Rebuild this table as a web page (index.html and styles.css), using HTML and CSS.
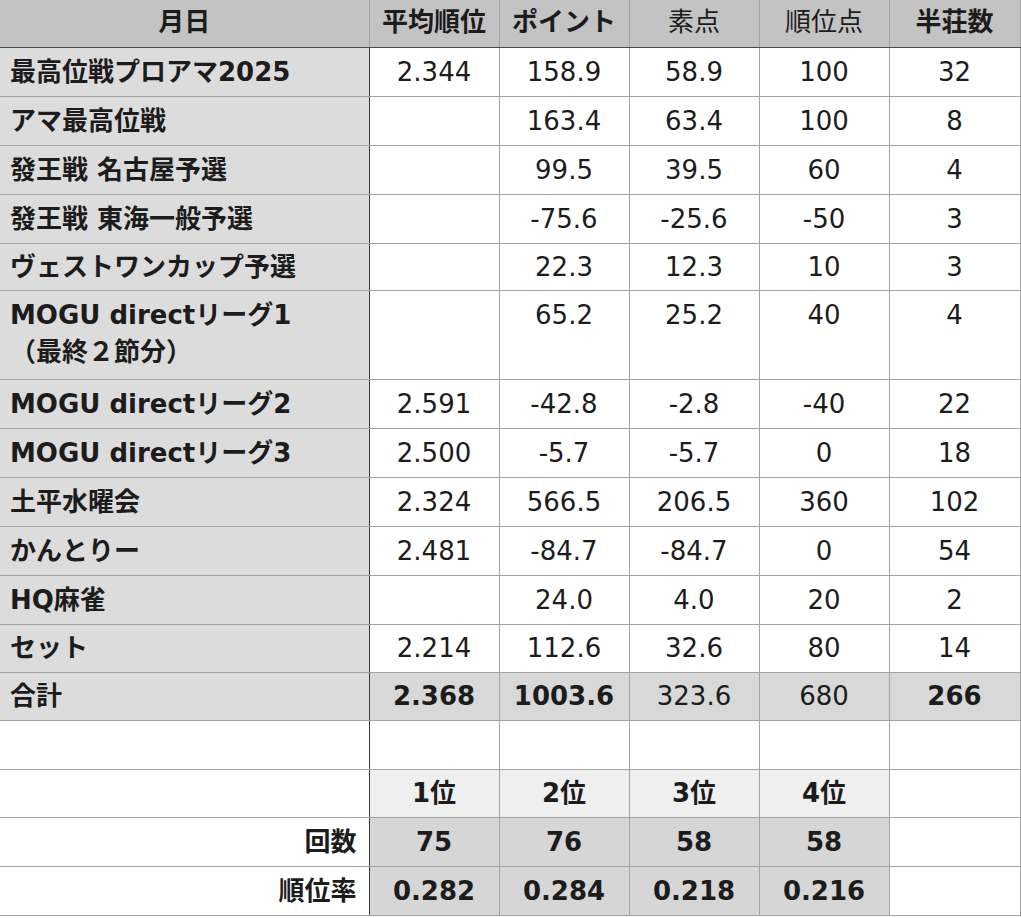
FILE: index.html
```html
<!DOCTYPE html>
<html lang="ja">
<head>
<meta charset="utf-8">
<link rel="stylesheet" href="styles.css">
</head>
<body>
<table class="sheet">
  <colgroup>
    <col class="c-name"><col class="c-num"><col class="c-num"><col class="c-num"><col class="c-num"><col class="c-last">
  </colgroup>
  <thead>
    <tr>
      <th class="b">月日</th>
      <th class="b">平均順位</th>
      <th class="b">ポイント</th>
      <th>素点</th>
      <th>順位点</th>
      <th class="b">半荘数</th>
    </tr>
  </thead>
  <tbody>
    <tr><td class="name">最高位戦プロアマ2025</td><td>2.344</td><td>158.9</td><td>58.9</td><td>100</td><td>32</td></tr>
    <tr><td class="name">アマ最高位戦</td><td></td><td>163.4</td><td>63.4</td><td>100</td><td>8</td></tr>
    <tr><td class="name">發王戦 名古屋予選</td><td></td><td>99.5</td><td>39.5</td><td>60</td><td>4</td></tr>
    <tr><td class="name">發王戦 東海一般予選</td><td></td><td>-75.6</td><td>-25.6</td><td>-50</td><td>3</td></tr>
    <tr class="shorter"><td class="name">ヴェストワンカップ予選</td><td></td><td>22.3</td><td>12.3</td><td>10</td><td>3</td></tr>
    <tr class="tall"><td class="name">MOGU directリーグ1<br>（最終２節分）</td><td></td><td>65.2</td><td>25.2</td><td>40</td><td>4</td></tr>
    <tr><td class="name">MOGU directリーグ2</td><td>2.591</td><td>-42.8</td><td>-2.8</td><td>-40</td><td>22</td></tr>
    <tr><td class="name">MOGU directリーグ3</td><td>2.500</td><td>-5.7</td><td>-5.7</td><td>0</td><td>18</td></tr>
    <tr><td class="name">土平水曜会</td><td>2.324</td><td>566.5</td><td>206.5</td><td>360</td><td>102</td></tr>
    <tr><td class="name">かんとりー</td><td>2.481</td><td>-84.7</td><td>-84.7</td><td>0</td><td>54</td></tr>
    <tr><td class="name">HQ麻雀</td><td></td><td>24.0</td><td>4.0</td><td>20</td><td>2</td></tr>
    <tr class="short"><td class="name">セット</td><td>2.214</td><td>112.6</td><td>32.6</td><td>80</td><td>14</td></tr>
    <tr class="total short"><td class="name">合計</td><td class="b">2.368</td><td class="b">1003.6</td><td>323.6</td><td>680</td><td class="b">266</td></tr>
    <tr class="blank"><td class="name plain"></td><td></td><td></td><td></td><td></td><td></td></tr>
    <tr class="ranks short"><td class="name plain"></td><td class="rk b">1位</td><td class="rk b">2位</td><td class="rk b">3位</td><td class="rk b">4位</td><td></td></tr>
    <tr class="stats"><td class="name plain label b">回数</td><td class="st b">75</td><td class="st b">76</td><td class="st b">58</td><td class="st b">58</td><td></td></tr>
    <tr class="stats"><td class="name plain label b">順位率</td><td class="st b">0.282</td><td class="st b">0.284</td><td class="st b">0.218</td><td class="st b">0.216</td><td></td></tr>
  </tbody>
</table>
</body>
</html>
```
FILE: styles.css
```css
html, body {
  margin: 0;
  padding: 0;
  background: #ffffff;
}

body {
  font-family: "DejaVu Sans", "Noto Sans CJK JP", sans-serif;
  color: #1c1c1c;
}

.sheet {
  border-collapse: collapse;
  table-layout: fixed;
  width: 1020px;
}

.c-name { width: 369px; }
.c-num { width: 130px; }
.c-last { width: 131px; }

.sheet th,
.sheet td {
  border: 1px solid #a3a3a3;
  height: 49px;
  padding: 0 6px;
  box-sizing: border-box;
  font-size: 26px;
  line-height: 37px;
  text-align: center;
  vertical-align: top;
  font-weight: 400;
  white-space: nowrap;
  overflow: hidden;
}

.sheet tr > :first-child { border-left: none; }
.sheet thead th { border-top: none; }

.sheet thead th {
  background: #c3c3c3;
  height: 47px;
  padding-top: 4px;
  border-bottom: 1px solid #4a4a4a;
}

.sheet td { padding-top: 6px; }

.sheet tr.short td { height: 48px; padding-top: 5px; }

.sheet tr.shorter td { height: 47px; padding-top: 5px; }

.sheet td.name {
  background: #dcdcdc;
  text-align: left;
  padding-left: 10px;
  font-weight: 700;
  border-right: 1px solid #3a3a3a;
}

.sheet .b { font-weight: 700; }

.sheet tr.tall td { height: 89px; }

.sheet td.name.plain { background: #ffffff; }

.sheet td.label {
  text-align: right;
  padding-right: 12px;
}

.total td { background: #d8d8d8; }

.ranks td.rk { background: #efefef; }

.stats td.st { background: #d6d6d6; }
```
